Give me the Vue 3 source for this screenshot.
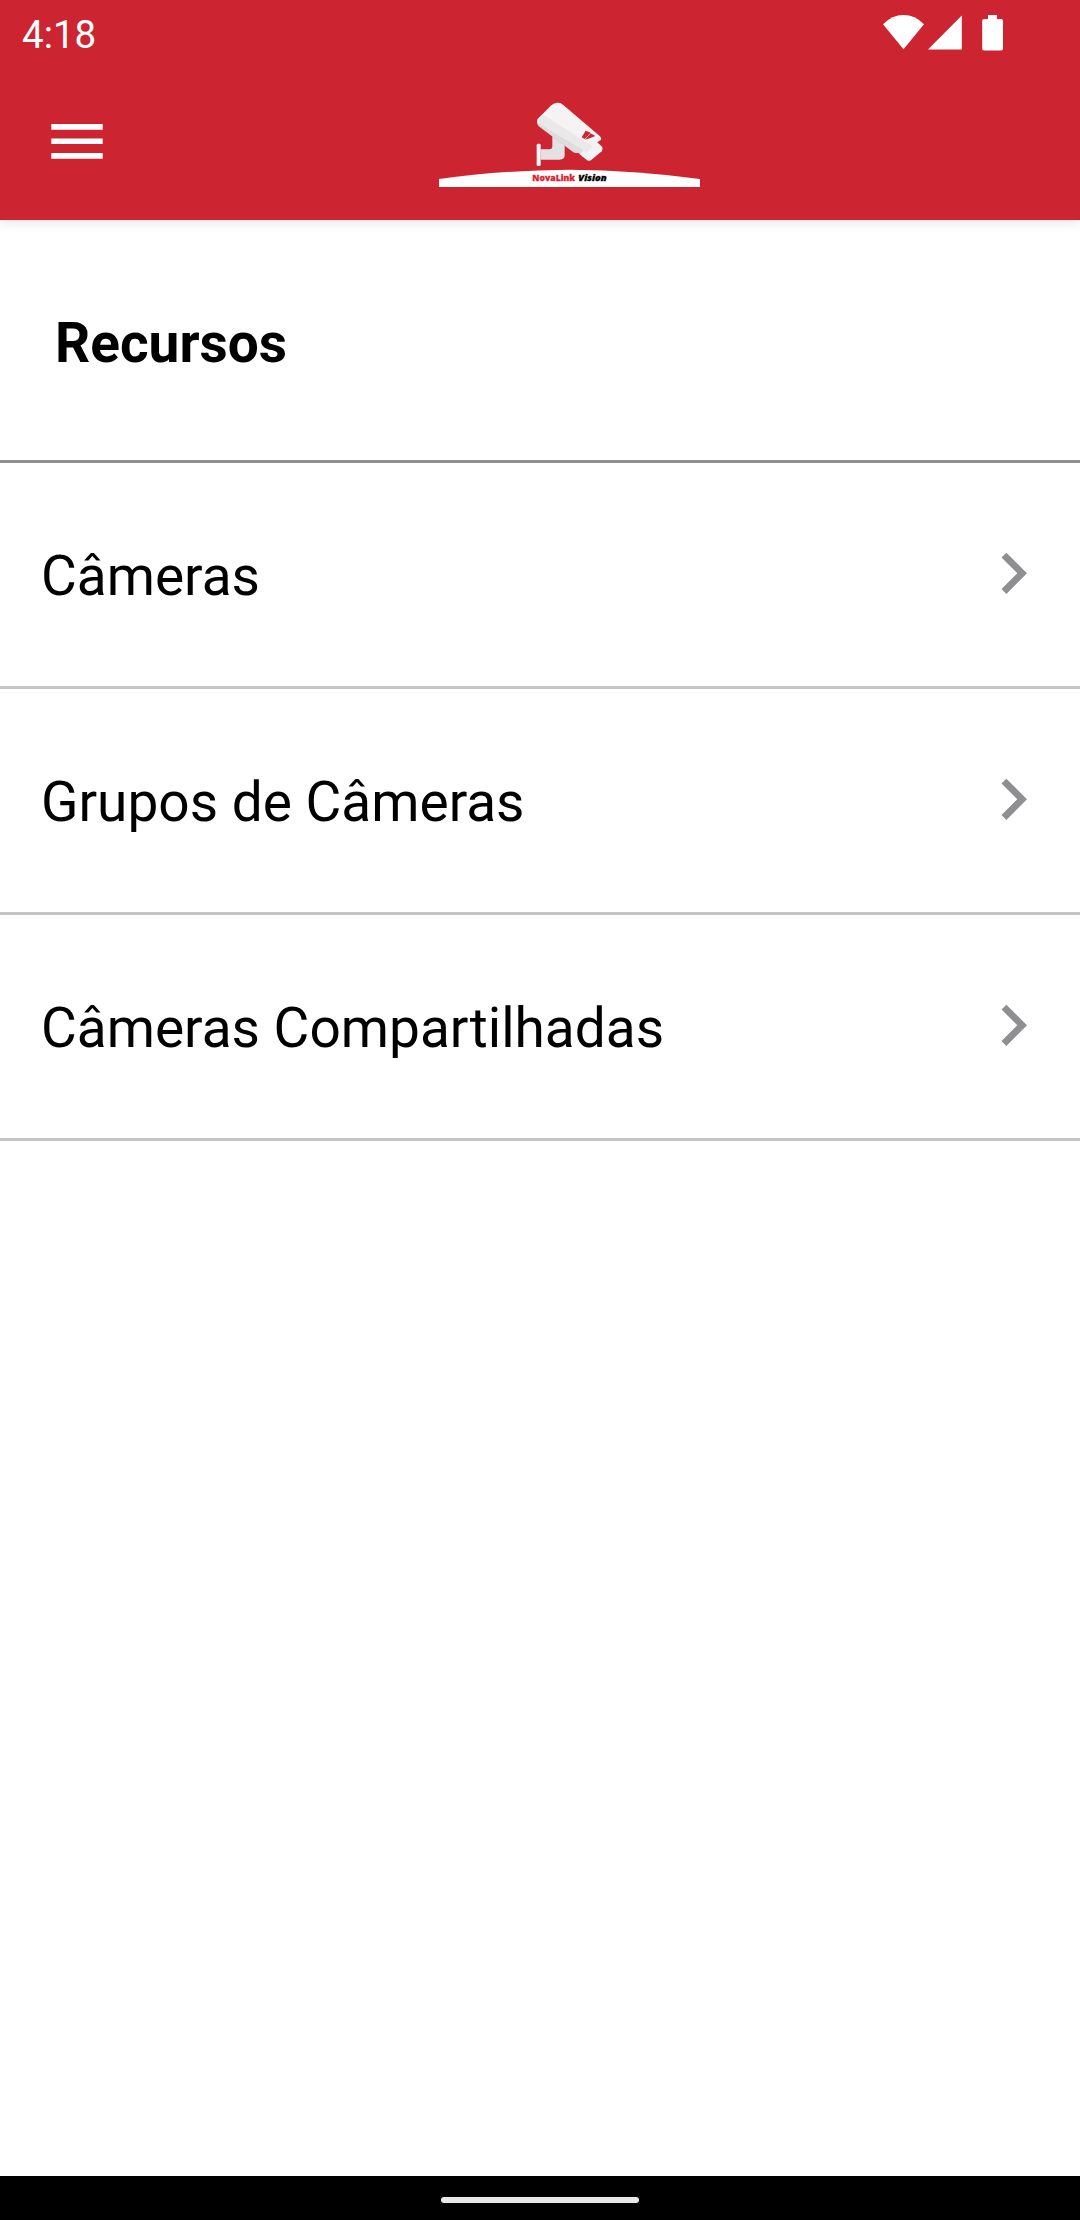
<script setup>
const items = ['Câmeras', 'Grupos de Câmeras', 'Câmeras Compartilhadas']
</script>

<template>
  <div class="screen">
    <header class="top">
      <div class="status">
        <span class="time">4:18</span>
        <svg class="status-icons" width="122" height="38" viewBox="0 0 122 38" fill="#fff">
          <path d="M0 9.300Q9 0 20.500 0T41 9.300L20.500 34.200Z" />
          <path d="M78.800 .6V34.500H45Z" />
          <path d="M105 0h9v4h4.200a1.800 1.800 0 0 1 1.800 1.800V33.800a1.800 1.800 0 0 1-1.800 1.800H101a1.800 1.800 0 0 1-1.800-1.800V5.800a1.800 1.800 0 0 1 1.800-1.800h4z" />
        </svg>
      </div>
      <div class="toolbar">
        <svg class="menu" width="52" height="35" viewBox="0 0 52 35" fill="#fff">
          <path d="M.3 0H51.700V5.700H.3ZM.3 14.400H51.700V20.100H.3ZM.3 29H51.700V34.700H.3Z" />
        </svg>
        <svg class="logo" width="280" height="110" viewBox="0 0 840 330">
          <path d="M27 267Q210 241 418 239Q628 241 810 267V291H27Z" fill="#fff" />
          <path d="M367 139L404 166V196Q404 209 389 209H332V178H358Q367 178 367 169Z" fill="#e3e1e1" />
          <rect x="320" y="161" width="12" height="67" rx="4" fill="#f8f6f6" />
          <path d="M321 94L337 73L497 168L516 176Q518 180 514 184L484 209Q477 214 470 209L444 188Q437 190 430 187L330 112Q320 105 321 94Z" fill="#dedcdc" />
          <path d="M480 148L502 157L517 171Q519 178 515 184L484 209Q477 214 470 209L451 194Z" fill="#f4f3f3" />
          <path d="M323 87L364 46Q372 38 382 38Q391 37 400 45L509 138Q516 144 513 149L500 158L477 183Q472 187 466 183L329 101Q320 96 323 87Z" fill="#f5f3f3" />
          <path d="M321 94Q321 88 329 81L338 73L488 169L476 183Q471 187 465 183L329 101Z" fill="#eae8e8" />
          <path d="M467 122L482 128L464 147L455 142ZM482 130L496 138L479 145L465 149Z" fill="#cc2430" />
          <text x="307" y="273" textLength="128" lengthAdjust="spacingAndGlyphs" class="brand">NovaLink</text>
          <text x="445" y="273" textLength="85" lengthAdjust="spacingAndGlyphs" class="brand vision">Vision</text>
        </svg>
      </div>
    </header>

    <main class="content">
      <h1 class="heading">Recursos</h1>
      <ul class="list">
        <li v-for="item in items" :key="item" class="row">
          <span class="label">{{ item }}</span>
          <svg class="chevron" viewBox="0 0 24 24" fill="#8f8f91">
            <path d="M10 6L8.590 7.410 13.170 12l-4.580 4.590L10 18l6-6z" />
          </svg>
        </li>
      </ul>
    </main>

    <footer class="nav"><span class="pill"></span></footer>
  </div>
</template>

<style>
body {
  margin: 0;
  background: #fff;
}
</style>

<style scoped>
.screen {
  display: flex;
  flex-direction: column;
  width: 1080px;
  height: 2220px;
  overflow: hidden;
  background: #fff;
  font-family: Roboto, sans-serif;
  color: #000;
}
.top {
  height: 220px;
  flex: none;
  background: #cc2430;
  box-shadow: 0 2px 12px rgba(0, 0, 0, 0.12);
}
.status {
  display: flex;
  justify-content: space-between;
  height: 66px;
  padding: 0 75px 0 22px;
}
.time {
  padding-top: 12px;
  font-size: 38.5px;
  line-height: 45px;
  color: #fff;
}
.status-icons {
  margin-top: 15px;
}
.toolbar {
  display: flex;
  align-items: flex-start;
  padding-left: 51px;
}
.menu {
  margin-top: 58px;
}
.logo {
  margin: 24px 0 0 327px;
}
.brand {
  font: 800 25px 'Open Sans', sans-serif;
  fill: #d91f32;
  stroke: #d91f32;
  stroke-width: 0.8px;
}
.vision {
  font-style: italic;
  fill: #000;
  stroke: #000;
}
.content {
  flex: 1;
}
.heading {
  box-sizing: border-box;
  display: flex;
  align-items: center;
  height: 243px;
  margin: 0;
  padding: 6px 55px 0;
  border-bottom: 3px solid #8f8f8f;
  font-size: 55px;
  font-weight: 700;
}
.list {
  margin: 0;
  padding: 0;
  list-style: none;
}
.row {
  box-sizing: border-box;
  display: flex;
  align-items: center;
  justify-content: space-between;
  height: 226px;
  padding: 0 26px 0 41px;
  border-bottom: 3px solid #c5c5c5;
}
.label {
  padding-top: 3px;
  font-size: 55px;
}
.chevron {
  width: 82.5px;
  height: 82.5px;
  margin-bottom: 3px;
}
.nav {
  display: flex;
  align-items: center;
  justify-content: center;
  height: 44px;
  background: #000;
}
.pill {
  width: 198px;
  height: 6px;
  margin-top: 4px;
  border-radius: 3px;
  background: #e8e8e8;
}
</style>
